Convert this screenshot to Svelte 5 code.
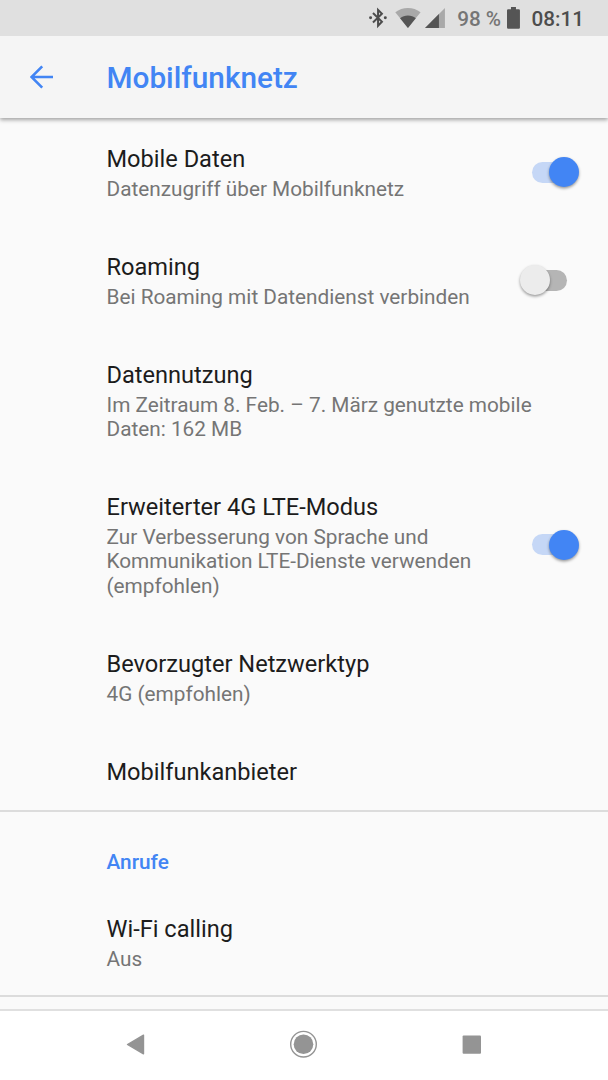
<script lang="ts">
	interface Preference {
		title: string;
		summary?: string[];
		checked?: boolean;
	}

	let network = $state<Preference[]>([
		{ title: 'Mobile Daten', summary: ['Datenzugriff über Mobilfunknetz'], checked: true },
		{ title: 'Roaming', summary: ['Bei Roaming mit Datendienst verbinden'], checked: false },
		{
			title: 'Datennutzung',
			summary: ['Im Zeitraum 8. Feb. – 7. März genutzte mobile', 'Daten: 162 MB']
		},
		{
			title: 'Erweiterter 4G LTE-Modus',
			summary: [
				'Zur Verbesserung von Sprache und',
				'Kommunikation LTE-Dienste verwenden',
				'(empfohlen)'
			],
			checked: true
		},
		{ title: 'Bevorzugter Netzwerktyp', summary: ['4G (empfohlen)'] },
		{ title: 'Mobilfunkanbieter' }
	]);

	let calls = $state<Preference[]>([{ title: 'Wi-Fi calling', summary: ['Aus'] }]);
</script>

{#snippet row(pref: Preference)}
	<div class="row">
		<div class="text">
			<div class="title">{pref.title}</div>
			{#if pref.summary}
				<div class="summary">
					{#each pref.summary as line}
						<div>{line}</div>
					{/each}
				</div>
			{/if}
		</div>
		{#if pref.checked !== undefined}
			<button
				class="switch"
				class:on={pref.checked}
				role="switch"
				aria-checked={pref.checked}
				aria-label={pref.title}
				onclick={() => (pref.checked = !pref.checked)}
			>
				<span class="thumb"></span>
			</button>
		{/if}
	</div>
{/snippet}

<div class="screen">
	<div class="status">
		<svg class="bluetooth" width="20" height="22" viewBox="0 0 20 22">
			<path d="M5 6 14 14.8 10.1 18.8V2.8L14 6.8 5 15.600" fill="none" stroke="#4d4d4d" stroke-width="2" />
			<circle cx="2.6" cy="10.8" r="1.5" fill="#4d4d4d" />
			<circle cx="17.4" cy="10.8" r="1.5" fill="#4d4d4d" />
		</svg>
		<svg class="wifi" width="26" height="21" viewBox="0 0 26 21">
			<path d="M13 20 .3 4.3C4 1.500 8.3 0 13 0s9 1.500 12.700 4.300z" fill="#a9a9a9" />
			<path d="M13 20 5.1 10.2C7.4 8.500 10 7.500 13 7.500s5.6 1 7.9 2.7z" fill="#555" />
		</svg>
		<svg class="signal" width="20" height="20" viewBox="0 0 20 20">
			<path d="M0 20 20 0V20z" fill="#a9a9a9" />
			<path d="M0 20 14 6V20z" fill="#555" />
		</svg>
		<span class="percent">98 %</span>
		<svg class="battery" width="13" height="22" viewBox="0 0 13 22">
			<path d="M4 0h5v2.3h2.8q1.2 0 1.2 1.2v17q0 1.2-1.2 1.2H1.2Q0 21.7 0 20.5v-17q0-1.2 1.2-1.2H4z" fill="#555" />
		</svg>
		<span class="clock">08:11</span>
	</div>

	<header>
		<svg class="back" width="24" height="24" viewBox="0 0 24 24">
			<path d="M12.2 1.3 1.5 12l10.7 10.7M1.5 12H23" fill="none" stroke="#4285f4" stroke-width="2.6" />
		</svg>
		<h1>Mobilfunknetz</h1>
	</header>

	<main>
		<section class="network">
			{#each network as pref (pref.title)}
				{@render row(pref)}
			{/each}
		</section>
		<section class="calls">
			<h2>Anrufe</h2>
			{#each calls as pref (pref.title)}
				{@render row(pref)}
			{/each}
		</section>
	</main>

	<nav>
		<svg width="20" height="22" viewBox="0 0 20 22">
			<path d="M17.5 2.2V20.8L1.5 11.5z" fill="#949494" stroke="#949494" stroke-width="1.4" stroke-linejoin="round" />
		</svg>
		<svg width="28" height="28" viewBox="0 0 28 28">
			<circle cx="13.5" cy="14.2" r="12.8" fill="none" stroke="#949494" stroke-width="1.4" />
			<circle cx="13.5" cy="14.2" r="9.8" fill="#949494" />
		</svg>
		<svg width="20" height="20" viewBox="0 0 20 20">
			<rect x="0.6" y="1.4" width="18.4" height="18.4" rx="1" fill="#949494" />
		</svg>
	</nav>
</div>

<style>
	:global(body) {
		margin: 0;
	}

	.screen {
		display: flex;
		flex-direction: column;
		width: 608px;
		height: 1080px;
		overflow: hidden;
		background: #fafafa;
		font-family: Roboto, sans-serif;
	}

	.status {
		display: flex;
		align-items: center;
		flex: none;
		box-sizing: border-box;
		height: 36px;
		padding: 0 24px 0 367.5px;
		background: #e0e0e0;
		font-size: 20.7px;
		font-weight: 500;
		white-space: nowrap;
		z-index: 2;
	}

	.wifi {
		margin-left: 8px;
	}

	.signal {
		margin-left: 4px;
	}

	.percent {
		margin: 1px 0 0 12px;
		width: 44px;
		color: #757575;
	}

	.battery {
		margin: 0 0 1px 6px;
	}

	.clock {
		margin: 1px 0 0 11.5px;
		color: #4d4d4d;
	}

	header {
		display: flex;
		align-items: center;
		flex: none;
		box-sizing: border-box;
		height: 82px;
		padding-left: 30px;
		background: #f5f5f5;
		box-shadow: 0 2px 4px rgba(0, 0, 0, 0.35);
		z-index: 1;
	}

	.back {
		margin-bottom: 1px;
	}

	h1 {
		margin: 2px 0 0 52.5px;
		color: #4285f4;
		font-size: 29.75px;
		font-weight: 500;
		line-height: 36px;
	}

	main {
		flex: 1;
		min-height: 0;
		padding-top: 1px;
		overflow: hidden;
	}

	section {
		box-sizing: border-box;
		border-bottom: 2px solid #dcdcdc;
	}

	.network {
		height: 693px;
	}

	.calls {
		height: 185px;
	}

	h2 {
		margin: 0;
		padding: 36px 0 13px 106.5px;
		color: #4285f4;
		font-size: 20.8px;
		font-weight: 500;
		line-height: 28px;
	}

	.row {
		display: flex;
		align-items: center;
		justify-content: space-between;
		padding: 26px 29px 26px 106.5px;
	}

	.title {
		color: #1c1c1c;
		font-size: 23.6px;
		line-height: 28px;
	}

	.summary {
		margin-top: 4px;
		color: #757575;
		font-size: 20.77px;
		line-height: 24.1px;
		white-space: nowrap;
	}

	.switch {
		display: flex;
		align-items: center;
		flex: none;
		box-sizing: border-box;
		width: 35px;
		height: 21px;
		margin: 0 12px 2px 0;
		padding: 0;
		border: 0;
		border-radius: 11px;
		background: #b5b5b5;
	}

	.thumb {
		flex: none;
		width: 30px;
		height: 30px;
		margin-left: -12px;
		border-radius: 50%;
		background: #ececec;
		box-shadow: 0 1.5px 3px rgba(0, 0, 0, 0.4);
	}

	.switch.on {
		background: #c5d7f6;
	}

	.switch.on .thumb {
		margin-left: 17px;
		background: #4285f4;
	}

	nav {
		display: flex;
		align-items: center;
		justify-content: space-between;
		flex: none;
		box-sizing: border-box;
		height: 71px;
		padding: 0 126px 3px;
		border-top: 2px solid #e0e0e0;
		background: #fff;
	}
</style>
